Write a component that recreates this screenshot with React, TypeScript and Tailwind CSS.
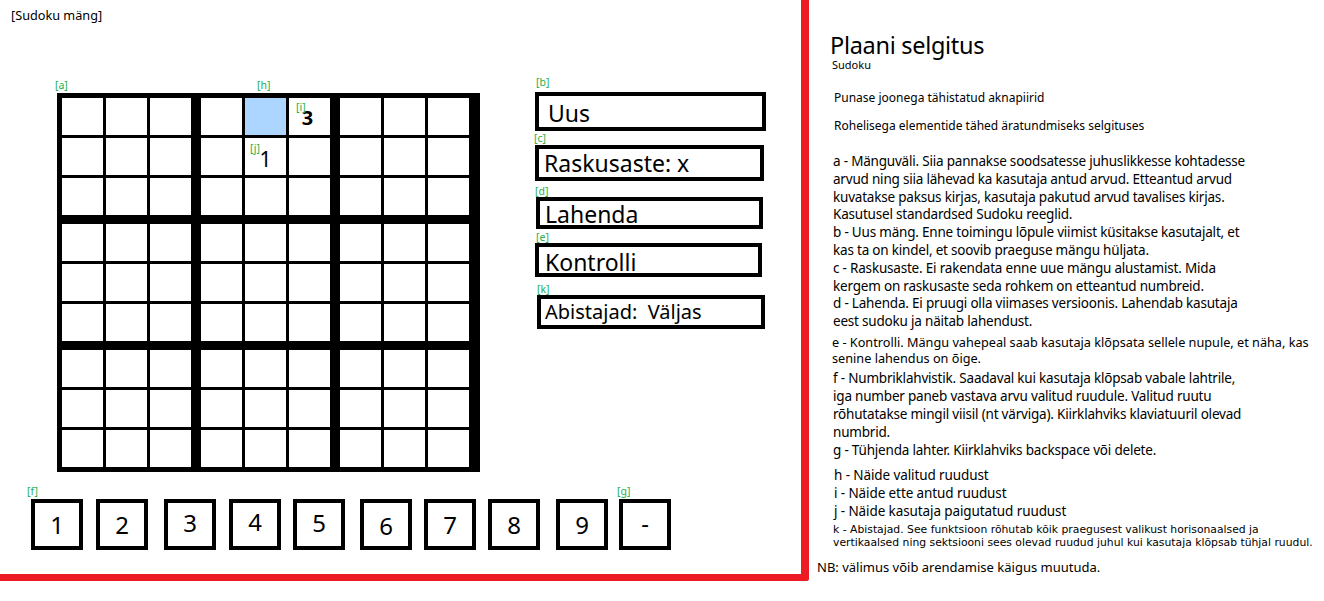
import React from "react";

const font = "font-['Noto_Sans','Open_Sans',sans-serif]";

function Tag({ text, className = "" }: { text: string; className?: string }) {
  return (
    <span
      className={`block text-[10.5px] leading-[10px] text-[#22b14c] ${className}`}
    >
      {text}
    </span>
  );
}

function Cell({ row, col }: { row: number; col: number }) {
  // plokk (0,1) hoiab näidiseid
  if (row === 0 && col === 4) {
    return <div className="h-[37px] w-[41px] bg-[#acd5ff]" />;
  }
  if (row === 0 && col === 5) {
    return (
      <div className="relative flex h-[37px] w-[41px] items-center justify-center bg-white pr-[4px] pt-[2px]">
        <Tag text="[i]" className="absolute left-[7px] top-[4px]" />
        <span className="text-[20px] font-bold leading-[20px] text-black">
          3
        </span>
      </div>
    );
  }
  if (row === 1 && col === 4) {
    return (
      <div className="relative flex h-[37px] w-[41px] items-center justify-center bg-white pt-[5px]">
        <Tag text="[j]" className="absolute left-[5px] top-[5px]" />
        <span className="text-[21px] leading-[21px] text-black">1</span>
      </div>
    );
  }
  return <div className="h-[37px] w-[41px] bg-white" />;
}

function Board() {
  const blocks = [0, 1, 2];
  return (
    <div className="bg-black pb-[5px] pl-[5px] pr-[11px] pt-[5px]">
      <div className="grid grid-cols-[repeat(3,129px)] gap-x-[10px] gap-y-[9px]">
        {blocks.map((br) =>
          blocks.map((bc) => (
            <div
              key={`${br}-${bc}`}
              className="grid grid-cols-[repeat(3,41px)] gap-[3px]"
            >
              {blocks.map((r) =>
                blocks.map((c) => (
                  <Cell key={`${r}-${c}`} row={br * 3 + r} col={bc * 3 + c} />
                ))
              )}
            </div>
          ))
        )}
      </div>
    </div>
  );
}

const keys = [
  { label: "1", className: "ml-[31px]" },
  { label: "2", className: "ml-[13px]" },
  { label: "3", className: "ml-[16px] pb-[4px]" },
  { label: "4", className: "ml-[13px] pb-[5px]" },
  { label: "5", className: "ml-[12px] pb-[3px]" },
  { label: "6", className: "ml-[15px] pt-[3px]" },
  { label: "7", className: "ml-[12px]" },
  { label: "8", className: "ml-[12px]" },
  { label: "9", className: "ml-[16px]" },
  { label: "-", className: "ml-[11px] pb-[4px]" },
];

const explainAD = [
  "a - Mänguväli. Siia pannakse soodsatesse juhuslikkesse kohtadesse",
  "arvud ning siia lähevad ka kasutaja antud arvud. Etteantud arvud",
  "kuvatakse paksus kirjas, kasutaja pakutud arvud tavalises kirjas.",
  "Kasutusel standardsed Sudoku reeglid.",
  "b - Uus mäng. Enne toimingu lõpule viimist küsitakse kasutajalt, et",
  "kas ta on kindel, et soovib praeguse mängu hüljata.",
  "c - Raskusaste. Ei rakendata enne uue mängu alustamist. Mida",
  "kergem on raskusaste seda rohkem on etteantud numbreid.",
  "d - Lahenda. Ei pruugi olla viimases versioonis. Lahendab kasutaja",
  "eest sudoku ja näitab lahendust.",
];

const explainE = [
  "e - Kontrolli. Mängu vahepeal saab kasutaja klõpsata sellele nupule, et näha, kas",
  "senine lahendus on õige.",
];

const explainFG = [
  "f - Numbriklahvistik. Saadaval kui kasutaja klõpsab vabale lahtrile,",
  "iga number paneb vastava arvu valitud ruudule. Valitud ruutu",
  "rõhutatakse mingil viisil (nt värviga). Kiirklahviks klaviatuuril olevad",
  "numbrid.",
  "g - Tühjenda lahter. Kiirklahviks backspace või delete.",
];

const explainHJ = [
  "h - Näide valitud ruudust",
  "i - Näide ette antud ruudust",
  "j - Näide kasutaja paigutatud ruudust",
];

const explainK = [
  "k - Abistajad. See funktsioon rõhutab kõik praegusest valikust horisonaalsed ja",
  "vertikaalsed ning sektsiooni sees olevad ruudud juhul kui kasutaja klõpsab tühjal ruudul.",
];

function Lines({ lines, className }: { lines: string[]; className: string }) {
  return (
    <div className={className}>
      {lines.map((l) => (
        <div key={l} className="whitespace-nowrap">
          {l}
        </div>
      ))}
    </div>
  );
}

export default function App() {
  return (
    <div className={`flex h-[601px] w-[1324px] bg-white text-black ${font}`}>
      <div className="h-[581px] w-[809px] shrink-0 rounded-br-[3px] border-b-[7px] border-r-8 border-[#ed1c24]">
        <div className="pl-[11px] pt-[7px] text-[12.7px] leading-[16px]">
          [Sudoku mäng]
        </div>

        <div className="mt-[54px] flex items-start">
          <div className="ml-[57px] pt-[3px]">
            <div className="-ml-[2px] flex">
              <Tag text="[a]" className="w-[202px]" />
              <Tag text="[h]" />
            </div>
            <div className="mt-[3px]">
              <Board />
            </div>
          </div>

          <div className="ml-[55px] flex flex-col">
            <Tag text="[b]" className="ml-[1px]" />
            <div className="mt-[5px] h-[39px] w-[231px] border-4 border-black pl-[9px] pt-[6px] text-[23px] leading-[23px]">
              Uus
            </div>
            <Tag text="[c]" className="mt-[2px] -ml-[1px]" />
            <div className="mt-[2px] h-[36px] w-[229px] border-4 border-black pl-[5px] pt-[3px] text-[23px] leading-[22px]">
              Raskusaste: x
            </div>
            <Tag text="[d]" className="mt-[5px]" />
            <div className="mt-[1px] ml-[1px] h-[32px] w-[227px] border-4 border-black pl-[5px] pt-[2px] text-[23px] leading-[23px]">
              Lahenda
            </div>
            <Tag text="[e]" className="mt-[3px] ml-[1px]" />
            <div className="mt-[1px] h-[34px] w-[227px] border-4 border-black pl-[6px] pt-[4px] text-[23px] leading-[23px]">
              Kontrolli
            </div>
            <Tag text="[k]" className="mt-[7px] ml-[2px]" />
            <div className="mt-[1px] ml-[2px] h-[34px] w-[228px] whitespace-pre border-4 border-black pl-[4px] pt-[3px] text-[20px] leading-[20px]">
              {"Abistajad:  Väljas"}
            </div>
          </div>
        </div>

        <div className="mt-[14px] ml-[27px] flex">
          <Tag text="[f]" className="w-[590px]" />
          <Tag text="[g]" />
        </div>
        <div className="mt-[3px] flex">
          {keys.map((k) => (
            <div
              key={k.label}
              className={`flex h-[51px] w-[52px] items-center justify-center border-4 border-black text-[24px] leading-[24px] ${k.className}`}
            >
              {k.label}
            </div>
          ))}
        </div>
      </div>

      <div className="flex-1 pl-[8px]">
        <div className="ml-[13px] mt-[33px] text-[23.5px] leading-[25px] tracking-[-0.3px]">
          Plaani selgitus
        </div>
        <div className="ml-[15px] text-[11px] leading-[13px]">Sudoku</div>
        <div className="ml-[17px] mt-[19px] text-[12px] leading-[16px]">
          Punase joonega tähistatud aknapiirid
        </div>
        <div className="ml-[17px] mt-[12px] text-[12px] leading-[16px]">
          Rohelisega elementide tähed äratundmiseks selgituses
        </div>
        <Lines
          lines={explainAD}
          className="ml-[16px] mt-[19px] text-[13.5px] leading-[17.8px] tracking-[-0.2px]"
        />
        <Lines
          lines={explainE}
          className="ml-[15px] mt-[4px] text-[12.7px] leading-[15.7px]"
        />
        <Lines
          lines={explainFG}
          className="ml-[16px] mt-[4px] text-[13.5px] leading-[17.8px] tracking-[-0.2px]"
        />
        <Lines
          lines={explainHJ}
          className="ml-[17px] mt-[7px] text-[13.5px] leading-[18px] tracking-[-0.1px]"
        />
        <Lines
          lines={explainK}
          className="ml-[16px] mt-[4px] font-['DejaVu_Sans',sans-serif] text-[10.8px] leading-[12.7px]"
        />
        <div className="mt-[8px] whitespace-nowrap text-[13px] leading-[18px]">
          NB: välimus võib arendamise käigus muutuda.
        </div>
      </div>
    </div>
  );
}
